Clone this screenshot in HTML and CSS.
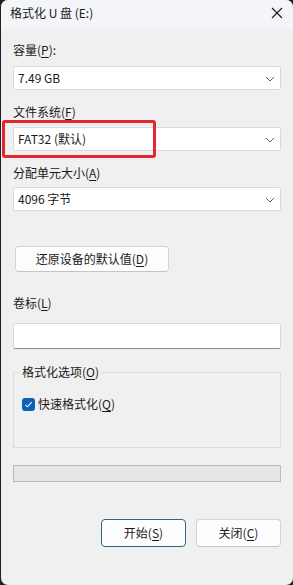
FILE: index.html
```html
<!DOCTYPE html>
<html lang="zh-CN">
<head>
    <meta charset="UTF-8">
    <meta name="viewport" content="width=device-width, initial-scale=1.0">
    <title>格式化 U 盘 (E:)</title>
    <link rel="stylesheet" href="styles.css">
</head>
<body>
    <div class="window">
        <div class="titlebar">
            <span class="title">格式化 U 盘 (E:)</span>
            <svg class="close" width="12" height="12" viewBox="0 0 12 12">
                <path d="M1 1 L11 11 M11 1 L1 11" stroke="#1a1a1a" stroke-width="1.1" fill="none"/>
            </svg>
        </div>

        <div class="content">
            <div class="label first">容量(<u>P</u>):</div>
            <div class="combo">
                <span>7.49 GB</span>
                <svg class="chevron" width="10" height="6" viewBox="0 0 10 6"><path d="M1 1 L5 5 L9 1" stroke="#5f5f5f" stroke-width="1" fill="none"/></svg>
            </div>

            <div class="label">文件系统(<u>F</u>)</div>
            <div class="combo combo-fs">
                <span>FAT32 (默认)</span>
                <svg class="chevron" width="10" height="6" viewBox="0 0 10 6"><path d="M1 1 L5 5 L9 1" stroke="#5f5f5f" stroke-width="1" fill="none"/></svg>
                <div class="highlight"></div>
            </div>

            <div class="label">分配单元大小(<u>A</u>)</div>
            <div class="combo combo-unit">
                <span>4096 字节</span>
                <svg class="chevron" width="10" height="6" viewBox="0 0 10 6"><path d="M1 1 L5 5 L9 1" stroke="#5f5f5f" stroke-width="1" fill="none"/></svg>
            </div>

            <button class="btn restore">还原设备的默认值(<u>D</u>)</button>

            <div class="label volume">卷标(<u>L</u>)</div>
            <div class="textbox"></div>

            <fieldset class="options">
                <legend>格式化选项(<u>O</u>)</legend>
                <div class="options-body">
                    <label class="check">
                        <span class="checkbox">
                            <svg width="9" height="9" viewBox="0 0 9 9"><path d="M1.5 4.8 L3.6 6.8 L7.6 2.2" stroke="#fff" stroke-width="1.1" fill="none"/></svg>
                        </span>
                        <span>快速格式化(<u>Q</u>)</span>
                    </label>
                </div>
            </fieldset>

            <div class="progress"></div>

            <div class="actions">
                <button class="btn action primary">开始(<u>S</u>)</button>
                <button class="btn action">关闭(<u>C</u>)</button>
            </div>
        </div>
    </div>
</body>
</html>
```

FILE: styles.css
```css
* {
    margin: 0;
    padding: 0;
    box-sizing: border-box;
}

body {
    background: #202020;
    font-family: "Noto Sans CJK SC", "Noto Sans", sans-serif;
    font-size: 12px;
    color: #1a1a1a;
    width: 293px;
    height: 585px;
    overflow: hidden;
}

.window {
    width: 292px;
    height: 585px;
    margin-left: 1px;
    background: #f0f0f0;
    border-radius: 7px;
    overflow: hidden;
}

.titlebar {
    height: 28px;
    background: #f3f5f8;
    display: flex;
    align-items: center;
    justify-content: space-between;
    padding: 0 10px 2px 9px;
}

.title {
    font-size: 12px;
    line-height: 16px;
}

.content {
    padding: 0 12px;
    display: flex;
    flex-direction: column;
}

.label {
    line-height: 16px;
    margin-top: 14px;
}

.label + .combo {
    margin-top: 7px;
}

.label.first + .combo {
    margin-top: 8px;
}

.label + .combo-unit {
    margin-top: 6px;
}

.combo {
    position: relative;
    height: 24px;
    background: #fff;
    border: 1px solid #dadada;
    border-radius: 2px;
    display: flex;
    align-items: center;
    justify-content: space-between;
    padding: 0 5px 0 4px;
    line-height: 16px;
}

.chevron {
    margin-top: 1px;
}

.highlight {
    position: absolute;
    left: -12px;
    top: -8px;
    width: 154px;
    height: 38px;
    border: 3px solid #e2282c;
    border-radius: 3px;
}

u {
    text-decoration: underline;
    text-underline-offset: 2px;
}

.btn {
    font-family: inherit;
    font-size: 12px;
    color: #1a1a1a;
    background: #fdfdfd;
    border: 1px solid #d4d4d4;
    border-bottom-color: #c4c4c4;
    border-radius: 4px;
    line-height: 16px;
}

.restore {
    margin-top: 35px;
    margin-left: 2px;
    width: 154px;
    height: 26px;
}

.label.volume {
    margin-top: 23px;
}

.textbox {
    margin-top: 12px;
    height: 26px;
    background: #fff;
    border: 1px solid #dadada;
    border-bottom-color: #8a8a8a;
    border-radius: 2px;
}

.options {
    margin-top: 15px;
    border: 1px solid #dcdcdc;
    padding: 0 6px;
}

.options legend {
    padding: 0 2px;
    line-height: 16px;
}

.options-body {
    height: 67px;
    padding: 16px 0 0 2px;
}

.check {
    display: flex;
    align-items: center;
    gap: 3px;
    line-height: 16px;
}

.checkbox {
    width: 13px;
    height: 13px;
    background: #0b63b8;
    border-radius: 3px;
    display: flex;
    align-items: center;
    justify-content: center;
}

.progress {
    margin-top: 17px;
    height: 17px;
    background: #e6e6e6;
    border: 1px solid #bcbcbc;
}

.actions {
    margin-top: 37px;
    display: flex;
    justify-content: flex-end;
    gap: 10px;
}

.action {
    width: 85px;
    height: 28px;
}

.primary {
    border: 1px solid #2f6580;
}
```
